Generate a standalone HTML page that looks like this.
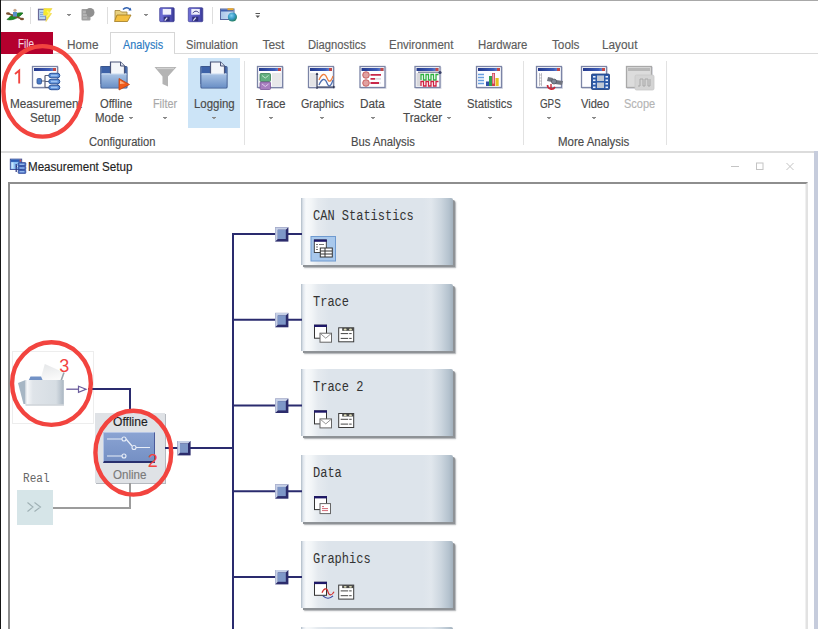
<!DOCTYPE html><html><head><meta charset="utf-8"><title>Measurement Setup</title><style>
*{margin:0;padding:0;box-sizing:border-box}
html,body{width:818px;height:629px;overflow:hidden;background:#fff}
body{position:relative;font-family:"Liberation Sans",sans-serif;color:#444}
.a{position:absolute}
.tab{position:absolute;top:38px;font-size:11.5px;line-height:13px;color:#4a4a4a;white-space:nowrap}
.lbl{position:absolute;font-size:11.5px;line-height:13px;white-space:nowrap;color:#4a4a4a;text-align:center}
.dd{position:absolute;width:5px;height:3px;background:linear-gradient(#888,#888) 0.5px 0/4px 1px no-repeat,linear-gradient(#999,#999) 1.5px 1px/2px 1px no-repeat}
.box{position:absolute;left:301px;width:152px;height:67px;
 background:linear-gradient(to right,#aebac6 0px,#dfe5ec 2px,#f7f9fb 5px,#f3f6f8 10px,#e5eaef 17px,#dde4eb 28px,#dde4eb 122px,#e1e7ed 130px,#ccd6df 140px,#b4c2ce 148px,#a2b0bc 152px);border-top-right-radius:2px;
 box-shadow:2px 2px 0 #8e9296,3px 3px 1.5px rgba(110,115,120,.6)}
.box .nm{position:absolute;left:12px;top:11px;font-family:"Liberation Mono",monospace;font-size:14px;line-height:15px;color:#333;white-space:nowrap;transform:scaleX(0.857);transform-origin:0 0}
svg{position:absolute;left:0;top:0;overflow:visible}
</style></head><body><div id="wrap" style="position:absolute;left:0;top:0;width:818px;height:629px;overflow:hidden;">
<div class="a" style="left:0;top:0;width:818px;height:1px;background:#a8a8a8"></div>
<div class="a" style="left:0;top:0;width:1px;height:629px;background:#161616"></div>
<div class="a" style="left:1px;top:32px;width:52px;height:22px;background:#b4002e"></div>
<div class="a" style="left:110px;top:32px;width:65px;height:22px;border:1px solid #d6d6d6;border-bottom:none;background:#fff"></div>
<div class="a" style="left:53px;top:53px;width:765px;height:1px;background:#dadada"></div>
<div class="a" style="left:111px;top:53px;width:63px;height:1px;background:#fff"></div>
<div class="a" style="left:188px;top:58px;width:52px;height:70px;background:#cce4f7"></div>
<div class="a" style="left:244px;top:61px;width:1px;height:84px;background:#e2e2e2"></div>
<div class="a" style="left:523px;top:61px;width:1px;height:84px;background:#e2e2e2"></div>
<div class="a" style="left:666px;top:61px;width:1px;height:84px;background:#e2e2e2"></div>
<div class="a" style="left:30px;top:7px;width:1px;height:17px;background:#dedede"></div>
<div class="a" style="left:107px;top:7px;width:1px;height:17px;background:#dedede"></div>
<div class="a" style="left:212px;top:7px;width:1px;height:17px;background:#dedede"></div>
<div class="a" style="left:1px;top:151px;width:813px;height:2px;background:#dcdcdc"></div>
<div class="a" style="left:814px;top:151px;width:4px;height:478px;background:#c6ccdc"></div>
<div class="a" style="left:8px;top:182px;width:800px;height:447px;border-left:2px solid #8e8e8e;border-top:2px solid #8e8e8e;border-right:2px solid #e2e2e2"></div>
<div class="a" style="left:805px;top:184px;width:1px;height:445px;background:#f0f0f0"></div>
<div class="box" style="top:198.0px"><div class="nm">CAN Statistics</div></div>
<div class="box" style="top:283.7px"><div class="nm">Trace</div></div>
<div class="box" style="top:369.4px"><div class="nm">Trace 2</div></div>
<div class="box" style="top:455.1px"><div class="nm">Data</div></div>
<div class="box" style="top:540.8px"><div class="nm">Graphics</div></div>
<div class="box" style="top:626.5px"><div class="nm"></div></div>
<div class="a" style="left:12px;top:351px;width:82px;height:73px;border:1px solid #ededed"></div>
<div class="a" style="left:95px;top:413px;width:70px;height:70px;background:#dfe2e6;box-shadow:1px 1px 0 #b5b9bf"></div>
<div class="a" style="left:103px;top:432px;width:52px;height:31px;background:linear-gradient(#8aa3d2,#7590c4);border-top:1px solid #b5c5e5;border-left:1px solid #b5c5e5;border-bottom:2px solid #28306e;border-right:1px solid #4a5a9a"></div>
<div class="a" style="left:17px;top:490px;width:36px;height:35px;background:#d6e5e8"></div>
<div class="a" style="left:17.98px;top:34.00px;font-size:12px;line-height:20px;white-space:nowrap;color:#f6d4e0;transform:scaleX(0.8222);transform-origin:0 0;-webkit-text-stroke:0.15px #f6d4e0;">File</div>
<div class="a" style="left:66.72px;top:34.60px;font-size:12px;line-height:20px;white-space:nowrap;color:#5c5c5c;transform:scaleX(0.9839);transform-origin:0 0;-webkit-text-stroke:0.15px #5c5c5c;">Home</div>
<div class="a" style="left:122.50px;top:34.60px;font-size:12px;line-height:20px;white-space:nowrap;color:#2a7ac3;transform:scaleX(0.8978);transform-origin:0 0;-webkit-text-stroke:0.15px #2a7ac3;">Analysis</div>
<div class="a" style="left:185.67px;top:34.60px;font-size:12px;line-height:20px;white-space:nowrap;color:#5c5c5c;transform:scaleX(0.9273);transform-origin:0 0;-webkit-text-stroke:0.15px #5c5c5c;">Simulation</div>
<div class="a" style="left:262.40px;top:34.60px;font-size:12px;line-height:20px;white-space:nowrap;color:#5c5c5c;transform:scaleX(1.0000);transform-origin:0 0;-webkit-text-stroke:0.15px #5c5c5c;">Test</div>
<div class="a" style="left:308.07px;top:34.60px;font-size:12px;line-height:20px;white-space:nowrap;color:#5c5c5c;transform:scaleX(0.9344);transform-origin:0 0;-webkit-text-stroke:0.15px #5c5c5c;">Diagnostics</div>
<div class="a" style="left:389.04px;top:34.60px;font-size:12px;line-height:20px;white-space:nowrap;color:#5c5c5c;transform:scaleX(0.9552);transform-origin:0 0;-webkit-text-stroke:0.15px #5c5c5c;">Environment</div>
<div class="a" style="left:477.55px;top:34.60px;font-size:12px;line-height:20px;white-space:nowrap;color:#5c5c5c;transform:scaleX(0.9490);transform-origin:0 0;-webkit-text-stroke:0.15px #5c5c5c;">Hardware</div>
<div class="a" style="left:551.60px;top:34.60px;font-size:12px;line-height:20px;white-space:nowrap;color:#5c5c5c;transform:scaleX(0.9786);transform-origin:0 0;-webkit-text-stroke:0.15px #5c5c5c;">Tools</div>
<div class="a" style="left:602.32px;top:34.60px;font-size:12px;line-height:20px;white-space:nowrap;color:#5c5c5c;transform:scaleX(0.9829);transform-origin:0 0;-webkit-text-stroke:0.15px #5c5c5c;">Layout</div>
<div class="a" style="left:9.52px;top:94.00px;font-size:12px;line-height:20px;white-space:nowrap;color:#4a4a4a;transform:scaleX(0.9795);transform-origin:0 0;-webkit-text-stroke:0.15px #4a4a4a;">Measurement</div>
<div class="a" style="left:30.12px;top:108.40px;font-size:12px;line-height:20px;white-space:nowrap;color:#4a4a4a;transform:scaleX(0.9767);transform-origin:0 0;-webkit-text-stroke:0.15px #4a4a4a;">Setup</div>
<div class="a" style="left:99.80px;top:94.00px;font-size:12px;line-height:20px;white-space:nowrap;color:#4a4a4a;transform:scaleX(0.9324);transform-origin:0 0;-webkit-text-stroke:0.15px #4a4a4a;">Offline</div>
<div class="a" style="left:94.84px;top:108.40px;font-size:12px;line-height:20px;white-space:nowrap;color:#4a4a4a;transform:scaleX(0.9586);transform-origin:0 0;-webkit-text-stroke:0.15px #4a4a4a;">Mode</div>
<div class="a" style="left:152.70px;top:94.00px;font-size:12px;line-height:20px;white-space:nowrap;color:#a8a8a8;transform:scaleX(0.9000);transform-origin:0 0;-webkit-text-stroke:0.15px #a8a8a8;">Filter</div>
<div class="a" style="left:193.75px;top:94.00px;font-size:12px;line-height:20px;white-space:nowrap;color:#4a4a4a;transform:scaleX(0.9537);transform-origin:0 0;-webkit-text-stroke:0.15px #4a4a4a;">Logging</div>
<div class="a" style="left:256.40px;top:94.00px;font-size:12px;line-height:20px;white-space:nowrap;color:#4a4a4a;transform:scaleX(0.9767);transform-origin:0 0;-webkit-text-stroke:0.15px #4a4a4a;">Trace</div>
<div class="a" style="left:300.80px;top:94.00px;font-size:12px;line-height:20px;white-space:nowrap;color:#4a4a4a;transform:scaleX(0.8958);transform-origin:0 0;-webkit-text-stroke:0.15px #4a4a4a;">Graphics</div>
<div class="a" style="left:359.82px;top:94.00px;font-size:12px;line-height:20px;white-space:nowrap;color:#4a4a4a;transform:scaleX(0.9800);transform-origin:0 0;-webkit-text-stroke:0.15px #4a4a4a;">Data</div>
<div class="a" style="left:413.60px;top:94.00px;font-size:12px;line-height:20px;white-space:nowrap;color:#4a4a4a;transform:scaleX(1.0000);transform-origin:0 0;-webkit-text-stroke:0.15px #4a4a4a;">State</div>
<div class="a" style="left:403.30px;top:108.40px;font-size:12px;line-height:20px;white-space:nowrap;color:#4a4a4a;transform:scaleX(0.9725);transform-origin:0 0;-webkit-text-stroke:0.15px #4a4a4a;">Tracker</div>
<div class="a" style="left:466.86px;top:94.00px;font-size:12px;line-height:20px;white-space:nowrap;color:#4a4a4a;transform:scaleX(0.9404);transform-origin:0 0;-webkit-text-stroke:0.15px #4a4a4a;">Statistics</div>
<div class="a" style="left:539.60px;top:94.00px;font-size:12px;line-height:20px;white-space:nowrap;color:#4a4a4a;transform:scaleX(0.8160);transform-origin:0 0;-webkit-text-stroke:0.15px #4a4a4a;">GPS</div>
<div class="a" style="left:580.70px;top:94.00px;font-size:12px;line-height:20px;white-space:nowrap;color:#4a4a4a;transform:scaleX(0.9267);transform-origin:0 0;-webkit-text-stroke:0.15px #4a4a4a;">Video</div>
<div class="a" style="left:623.78px;top:94.00px;font-size:12px;line-height:20px;white-space:nowrap;color:#b4b4b4;transform:scaleX(0.9182);transform-origin:0 0;-webkit-text-stroke:0.15px #b4b4b4;">Scope</div>
<div class="a" style="left:88.80px;top:131.60px;font-size:12px;line-height:20px;white-space:nowrap;color:#4a4a4a;transform:scaleX(0.9296);transform-origin:0 0;-webkit-text-stroke:0.15px #4a4a4a;">Configuration</div>
<div class="a" style="left:351.26px;top:131.60px;font-size:12px;line-height:20px;white-space:nowrap;color:#4a4a4a;transform:scaleX(0.9373);transform-origin:0 0;-webkit-text-stroke:0.15px #4a4a4a;">Bus Analysis</div>
<div class="a" style="left:558.05px;top:131.60px;font-size:12px;line-height:20px;white-space:nowrap;color:#4a4a4a;transform:scaleX(0.9541);transform-origin:0 0;-webkit-text-stroke:0.15px #4a4a4a;">More Analysis</div>
<div class="dd" style="left:66.5px;top:14px"></div>
<div class="dd" style="left:143.5px;top:14px"></div>
<div class="dd" style="left:128.2px;top:117px"></div>
<div class="dd" style="left:162.5px;top:117px"></div>
<div class="dd" style="left:211.5px;top:117px"></div>
<div class="dd" style="left:268.3px;top:117px"></div>
<div class="dd" style="left:319.8px;top:117px"></div>
<div class="dd" style="left:370.4px;top:117px"></div>
<div class="dd" style="left:446.9px;top:117px"></div>
<div class="dd" style="left:487.0px;top:117px"></div>
<div class="dd" style="left:546.9px;top:117px"></div>
<div class="dd" style="left:591.9px;top:117px"></div>
<div class="a" style="left:28.43px;top:157.40px;font-size:12px;line-height:20px;white-space:nowrap;color:#1e1e1e;transform:scaleX(0.9654);transform-origin:0 0;-webkit-text-stroke:0.15px #1e1e1e;">Measurement Setup</div>
<div class="a" style="left:112.70px;top:412.00px;font-size:12px;line-height:20px;white-space:nowrap;color:#1e1e1e;transform:scaleX(1.0088);transform-origin:0 0;-webkit-text-stroke:0.15px #1e1e1e;">Offline</div>
<div class="a" style="left:113.20px;top:465.00px;font-size:12px;line-height:20px;white-space:nowrap;color:#7a7a7a;transform:scaleX(0.9657);transform-origin:0 0;-webkit-text-stroke:0.15px #7a7a7a;">Online</div>
<div class="a" style="left:23.2px;top:472.8px;font-family:'Liberation Mono',monospace;font-size:12px;line-height:13px;color:#666;white-space:nowrap;transform:scaleX(0.92);transform-origin:0 0">Real</div>
<svg width="818" height="629" viewBox="0 0 818 629"><defs>
<linearGradient id="flop" x1="0" x2="1"><stop offset="0" stop-color="#7070d8"/><stop offset="0.8" stop-color="#4a4ab0"/><stop offset="1" stop-color="#383890"/></linearGradient><linearGradient id="wglobe" x1="0" x2="1"><stop offset="0" stop-color="#a8c4e8"/><stop offset="1" stop-color="#d8e6f6"/></linearGradient>
<radialGradient id="globe" cx="0.4" cy="0.35" r="0.7"><stop offset="0" stop-color="#80d0f0"/><stop offset="0.5" stop-color="#3a9ac8"/><stop offset="1" stop-color="#1f7a50"/></radialGradient>
<linearGradient id="tb" x1="0" x2="1"><stop offset="0" stop-color="#243a8c"/><stop offset="0.7" stop-color="#3e5cb8"/><stop offset="1" stop-color="#7d9ad8"/></linearGradient>
<linearGradient id="fold" x1="0" y1="0" x2="0" y2="1"><stop offset="0" stop-color="#a9c3e4"/><stop offset="1" stop-color="#6b90c6"/></linearGradient>
<linearGradient id="conn" x1="0" y1="0" x2="1" y2="1"><stop offset="0" stop-color="#b7c6e4"/><stop offset="1" stop-color="#7f97c8"/></linearGradient>
<linearGradient id="gfold" x1="0" y1="0" x2="1" y2="0"><stop offset="0" stop-color="#c8d0d8"/><stop offset="0.05" stop-color="#f6f8fa"/><stop offset="0.2" stop-color="#dfe4e9"/><stop offset="0.8" stop-color="#d6dde3"/><stop offset="1" stop-color="#aab6c2"/></linearGradient><linearGradient id="paper" x1="0" y1="0" x2="0.3" y2="1"><stop offset="0" stop-color="#e4e6e8"/><stop offset="1" stop-color="#fafafa"/></linearGradient>
</defs><rect x="33" y="67" width="26" height="22" fill="#c8ccd8" opacity="0.6"/><rect x="32.5" y="66.5" width="25" height="21" fill="#fdfdff" stroke="#7b84a6" stroke-width="1.3"/><rect x="34" y="68" width="22" height="3" fill="url(#tb)"/><rect x="53" y="68" width="3" height="3" fill="#c24848"/><path d="M41 81 H45 M45 75.5 V87.5 M45 75.5 H49 M45 81.5 H49 M45 87.5 H49" stroke="#5a6078" stroke-width="1.2" fill="none"/><rect x="37" y="78.5" width="4.5" height="5.5" rx="1.2" fill="#4a7cc8" stroke="#2d4f90" stroke-width="0.8"/><rect x="48.8" y="73.3" width="11" height="4.5" rx="2.2" fill="#5b8fd8" stroke="#2a5298" stroke-width="1"/><rect x="51" y="74.7" width="6.5" height="1.6" fill="#9fc4f2"/><rect x="48.8" y="79.3" width="11" height="4.5" rx="2.2" fill="#5b8fd8" stroke="#2a5298" stroke-width="1"/><rect x="51" y="80.7" width="6.5" height="1.6" fill="#9fc4f2"/><rect x="48.8" y="85.2" width="11" height="4.5" rx="2.2" fill="#5b8fd8" stroke="#2a5298" stroke-width="1"/><rect x="51" y="86.60000000000001" width="6.5" height="1.6" fill="#9fc4f2"/><path d="M100.5 66 H110.5 V84 H100.5 Z" fill="#4a6aa8"/><rect x="101.0" y="66.5" width="26" height="21.5" rx="1" fill="url(#fold)" stroke="#3b568c" stroke-width="1.2"/><rect x="101.5" y="67" width="25" height="6" fill="#3d62a8"/><path d="M110.5 62 H120.5 L124.5 66 V78 H110.5 Z" fill="#f4f6fa" stroke="#4a5478" stroke-width="1.2"/><path d="M120.5 62 V66 H124.5" fill="#dfe4ee" stroke="#4a5478" stroke-width="1"/><rect x="101.5" y="74" width="25" height="13.5" fill="url(#fold)"/><path d="M101.5 74 H126.5" stroke="#c9daf0" stroke-width="1"/><path d="M119 78.5 L129.5 84.5 L119 90 Z" fill="#f05a1a" stroke="#c04010" stroke-width="0.8"/><path d="M120 80.5 L125 83.5 L120 84 Z" fill="#ffb080"/><path d="M200.5 66 H210.5 V84 H200.5 Z" fill="#4a6aa8"/><rect x="201.0" y="66.5" width="26" height="21.5" rx="1" fill="url(#fold)" stroke="#3b568c" stroke-width="1.2"/><rect x="201.5" y="67" width="25" height="6" fill="#3d62a8"/><path d="M210.5 62 H220.5 L224.5 66 V78 H210.5 Z" fill="#f4f6fa" stroke="#4a5478" stroke-width="1.2"/><path d="M220.5 62 V66 H224.5" fill="#dfe4ee" stroke="#4a5478" stroke-width="1"/><rect x="201.5" y="74" width="25" height="13.5" fill="url(#fold)"/><path d="M201.5 74 H226.5" stroke="#c9daf0" stroke-width="1"/><path d="M154.5 67 H176.5 L168 76.5 V86.5 L162.5 84 V76.5 Z" fill="#b4b4b4"/><path d="M157 68.5 H174" stroke="#d0d0d0" stroke-width="1.2"/><rect x="258" y="67" width="26" height="22" fill="#c8ccd8" opacity="0.6"/><rect x="257.5" y="66.5" width="25" height="21" fill="#fdfdff" stroke="#7b84a6" stroke-width="1.3"/><rect x="259" y="68" width="22" height="3" fill="url(#tb)"/><rect x="278" y="68" width="3" height="3" fill="#c24848"/><rect x="272" y="73" width="9" height="13" fill="#e8e8ea"/><rect x="260" y="73.5" width="10.5" height="8" rx="1" fill="#62b080" stroke="#3d8058" stroke-width="0.8"/><path d="M262 75.5 L265.3 78 L268.5 75.5" stroke="#d8f0e0" stroke-width="0.8" fill="none"/><rect x="260" y="82" width="10.5" height="7.5" rx="1" fill="#a880c0" stroke="#7a5698" stroke-width="0.8"/><path d="M262 84 L265.3 86.5 L268.5 84" stroke="#eadcf4" stroke-width="0.8" fill="none"/><rect x="309" y="67" width="26" height="22" fill="#c8ccd8" opacity="0.6"/><rect x="308.5" y="66.5" width="25" height="21" fill="#fdfdff" stroke="#7b84a6" stroke-width="1.3"/><rect x="310" y="68" width="22" height="3" fill="url(#tb)"/><rect x="329" y="68" width="3" height="3" fill="#c24848"/><rect x="310" y="73" width="6" height="13" fill="#e4e4e6"/><path d="M319 80 C322 73,325 73,327 78 S331 82,333 76" stroke="#f08040" stroke-width="1.3" fill="none"/><path d="M319 85 C322 78,325 78,327 83 S331 86,333 80" stroke="#5070b0" stroke-width="1.3" fill="none"/><path d="M317 73 V89 M317 87 H334" stroke="#333a58" stroke-width="1.2"/><path d="M315.5 75 L317 72.5 L318.5 75 Z M333 85.5 L335.5 87 L333 88.5 Z" fill="#333a58"/><rect x="360.5" y="67" width="26" height="22" fill="#c8ccd8" opacity="0.6"/><rect x="360.0" y="66.5" width="25" height="21" fill="#fdfdff" stroke="#7b84a6" stroke-width="1.3"/><rect x="361.5" y="68" width="22" height="3" fill="url(#tb)"/><rect x="380.5" y="68" width="3" height="3" fill="#c24848"/><circle cx="366" cy="75" r="3.3" fill="#e0a0a0" stroke="#c04a4a" stroke-width="0.8"/><circle cx="366" cy="83" r="3.3" fill="#e0a0a0" stroke="#c04a4a" stroke-width="0.8"/><path d="M370.5 74.8 H381 M370.5 78.8 H375 M370.5 83 H379" stroke="#c8284a" stroke-width="1.8"/><path d="M375 78.8 H381 M379 83 H381" stroke="#d0d0d8" stroke-width="1.2"/><rect x="415.5" y="67" width="26" height="22" fill="#c8ccd8" opacity="0.6"/><rect x="415.0" y="66.5" width="25" height="21" fill="#fdfdff" stroke="#7b84a6" stroke-width="1.3"/><rect x="416.5" y="68" width="22" height="3" fill="url(#tb)"/><rect x="435.5" y="68" width="3" height="3" fill="#c24848"/><rect x="416.5" y="73" width="4" height="13" fill="#d8d8dc"/><path d="M418 72.2 H440" stroke="#5a6080" stroke-width="1"/><circle cx="440" cy="72.5" r="1.6" fill="#3a4068"/><path d="M421 80 V74.5 H423.5 V80 H426 V74.5 H428.5 V80 H431 V74.5 H433.5 V80 H436 V74.5 H438.5" stroke="#30b040" stroke-width="1.3" fill="none"/><path d="M421 86 V81.5 H423.5 V86 H426 V81.5 H428.5 V86 H431 V81.5 H433.5 V86 H436 V81.5 H438.5" stroke="#d02040" stroke-width="1.3" fill="none"/><rect x="477" y="67" width="26" height="22" fill="#c8ccd8" opacity="0.6"/><rect x="476.5" y="66.5" width="25" height="21" fill="#fdfdff" stroke="#7b84a6" stroke-width="1.3"/><rect x="478" y="68" width="22" height="3" fill="url(#tb)"/><rect x="497" y="68" width="3" height="3" fill="#c24848"/><path d="M478 74.5 H484 M478 77.5 H484 M478 80.5 H484 M478 83.5 H484" stroke="#6aa0e0" stroke-width="1.4"/><rect x="486" y="81.5" width="3" height="4.5" fill="#3050a8"/><rect x="489" y="76" width="3" height="10" fill="#30a050"/><rect x="492" y="73" width="3" height="13" fill="#d04050"/><rect x="492.6" y="73.6" width="1.6" height="10" fill="#f0b0c0"/><rect x="495.5" y="78" width="3.2" height="8" fill="#e8c020"/><rect x="537" y="67" width="26" height="22" fill="#c8ccd8" opacity="0.6"/><rect x="536.5" y="66.5" width="25" height="21" fill="#fdfdff" stroke="#7b84a6" stroke-width="1.3"/><rect x="538" y="68" width="22" height="3" fill="url(#tb)"/><rect x="557" y="68" width="3" height="3" fill="#c24848"/><path d="M539.5 73 V86 M541.5 73 V86" stroke="#c0c0c8" stroke-width="1"/><path d="M539 75 H542 M539 78 H542 M539 81 H542 M539 84 H542" stroke="#a8a8b0" stroke-width="0.7"/><path d="M548 77 L553 78 L552 82 L547 81 Z M556 80 L563 81 L562 85 L555 84 Z" fill="#707480"/><circle cx="554" cy="81.5" r="2.5" fill="#808898" stroke="#505460" stroke-width="0.8"/><path d="M547.5 85 A4 4 0 0 0 555 87" stroke="#c82838" stroke-width="1.6" fill="none"/><path d="M551 84 V89" stroke="#c82838" stroke-width="1.4"/><rect x="582" y="67" width="26" height="22" fill="#c8ccd8" opacity="0.6"/><rect x="581.5" y="66.5" width="25" height="21" fill="#fdfdff" stroke="#7b84a6" stroke-width="1.3"/><rect x="583" y="68" width="22" height="3" fill="url(#tb)"/><rect x="602" y="68" width="3" height="3" fill="#c24848"/><rect x="591.5" y="74" width="18" height="15.5" rx="1" fill="#2d5aa8" stroke="#1e3c78" stroke-width="0.8"/><rect x="593" y="76" width="2.5" height="1.6" fill="#e8f0ff"/><rect x="605.5" y="76" width="2.5" height="1.6" fill="#e8f0ff"/><rect x="593" y="79.5" width="2.5" height="1.6" fill="#e8f0ff"/><rect x="605.5" y="79.5" width="2.5" height="1.6" fill="#e8f0ff"/><rect x="593" y="83" width="2.5" height="1.6" fill="#e8f0ff"/><rect x="605.5" y="83" width="2.5" height="1.6" fill="#e8f0ff"/><rect x="593" y="86.5" width="2.5" height="1.6" fill="#e8f0ff"/><rect x="605.5" y="86.5" width="2.5" height="1.6" fill="#e8f0ff"/><rect x="597" y="75.5" width="7" height="5.5" fill="#c0c8d4"/><rect x="597" y="82.5" width="7" height="5.5" fill="#c0c8d4"/><rect x="627" y="67" width="26" height="22" fill="#c8ccd8" opacity="0.6"/><rect x="626.5" y="66.5" width="25" height="21" fill="#dcdcdc" stroke="#a9a9a9" stroke-width="1.3"/><rect x="628" y="68" width="22" height="3" fill="#b8b8b8"/><rect x="635" y="75" width="19" height="15" rx="1.5" fill="#d4d4d4" stroke="#c8c8c8" stroke-width="0.8"/><path d="M638 86 H640 V79 H643 V86 H645 V79 H648 V86 H650 V79" stroke="#a8a8a8" stroke-width="1" fill="none"/><path d="M7 19.5 C12 14,18 12,23 13 C19 18,12 21,7 19.5 Z" fill="#1d8a24" stroke="#0d5a14" stroke-width="0.6"/><path d="M8 13.5 L22 19" stroke="#7a5030" stroke-width="1.6"/><ellipse cx="8" cy="13.5" rx="2" ry="1.2" fill="#7a5030"/><ellipse cx="22" cy="19" rx="2" ry="1.2" fill="#7a5030"/><rect x="13" y="12" width="4" height="4.5" fill="#5a90c8"/><circle cx="15" cy="10.3" r="1.6" fill="#c8a890"/><rect x="38.5" y="9.3" width="7.5" height="10.5" fill="#b8d4f0" stroke="#6a6a98" stroke-width="1.2"/><path d="M40 12.5 H45 M40 14.5 H45 M40 16.5 H45" stroke="#7aa0d0" stroke-width="0.8"/><path d="M44 8.5 H52 L49 13 L51.5 13.5 L46 21.5 L47 15.5 L43.5 15 Z" fill="#f6ea28" stroke="#f0d860" stroke-width="0.8"/><path d="M47 11 L49.5 13.5 L46.5 17" stroke="#fff36a" stroke-width="1.5" fill="none"/><rect x="81.5" y="9" width="9" height="11.5" rx="1" fill="#a0a0a0"/><circle cx="90" cy="12.5" r="4.5" fill="#909090"/><path d="M83 12 H86 M83 15 H87 M83 18 H87" stroke="#d0d0d0" stroke-width="0.8"/><path d="M115 10.5 H120 L121.5 12 H127 V20.5 H115 Z" fill="#e8d080" stroke="#a08030" stroke-width="0.8"/><path d="M117 15 H131 L127.5 21.5 H114.5 Z" fill="#f4c040" stroke="#a07820" stroke-width="0.8"/><path d="M123 9.5 C125 7,129 7,130 10" stroke="#3060b0" stroke-width="1.4" fill="none"/><path d="M128.5 10.5 L131.5 10.5 L130.5 7.5 Z" fill="#3060b0"/><rect x="159.7" y="7.7" width="14.5" height="14" rx="1" fill="url(#flop)" stroke="#3a3a90" stroke-width="0.7"/><rect x="162.7" y="8.9" width="8.5" height="5.8" fill="#f0f0fc"/><rect x="163.7" y="16.7" width="6" height="4.5" fill="#30307a"/><path d="M164.7 20.7 L167.2 17.7" stroke="#e8e8f8" stroke-width="1.2"/><rect x="188.3" y="7.7" width="14.5" height="14" rx="1" fill="url(#flop)" stroke="#3a3a90" stroke-width="0.7"/><rect x="191.3" y="8.9" width="8.5" height="5.8" fill="#f0f0fc"/><rect x="192.3" y="16.7" width="6" height="4.5" fill="#30307a"/><path d="M193.3 20.7 L195.8 17.7" stroke="#e8e8f8" stroke-width="1.2"/><path d="M192.8 13.2 C194.3 10.7,197.3 10.7,198.8 12.7" stroke="#30307a" stroke-width="1" fill="none"/><rect x="220.5" y="9" width="13.5" height="10.5" fill="url(#wglobe)" stroke="#5868a0" stroke-width="1"/><rect x="221" y="9.5" width="12.5" height="2" fill="#4060b0"/><rect x="227.5" y="8.2" width="6" height="2" fill="#e8a830"/><circle cx="232.4" cy="17" r="4.6" fill="url(#globe)"/><path d="M255.5 13.5 H260" stroke="#555" stroke-width="1"/><path d="M255.5 15.5 H260 L257.75 18 Z" fill="#555"/><rect x="10.3" y="159.1" width="11.4" height="10.4" fill="#8cc0f2" stroke="#3c4c94" stroke-width="0.9"/><rect x="10.8" y="159.6" width="10.4" height="2.3" fill="#2e5cb4"/><rect x="19.6" y="159.6" width="1.6" height="2" fill="#c85050"/><rect x="11.5" y="162.5" width="2" height="6" fill="#c8e4fc"/><path d="M16.2 164 V172 M16.2 166.5 H18" stroke="#2a3480" stroke-width="1.2"/><path d="M17 165.5 L18.5 166.5 L17 167.5 Z" fill="#e0ecff"/><rect x="18.2" y="162.6" width="7.6" height="3.4" rx="0.6" fill="#4a70c4" stroke="#2a4090" stroke-width="0.7"/><rect x="19.6" y="163.7" width="4.8" height="1.2" fill="#9cc0f0"/><rect x="18.2" y="166.3" width="7.6" height="3.4" rx="0.6" fill="#4a70c4" stroke="#2a4090" stroke-width="0.7"/><rect x="19.6" y="167.4" width="4.8" height="1.2" fill="#9cc0f0"/><rect x="18.2" y="170.0" width="7.6" height="3.4" rx="0.6" fill="#4a70c4" stroke="#2a4090" stroke-width="0.7"/><rect x="19.6" y="171.1" width="4.8" height="1.2" fill="#9cc0f0"/><path d="M731 166.5 H739" stroke="#c4c4c4" stroke-width="1"/><rect x="756.5" y="163" width="6.5" height="6.5" fill="none" stroke="#c4c4c4" stroke-width="1"/><path d="M786.5 163 L793.5 170 M793.5 163 L786.5 170" stroke="#c4c4c4" stroke-width="1"/><path d="M233 234 V629" stroke="#2a2b6e" stroke-width="2" fill="none"/><path d="M232 234.1 H302" stroke="#2a2b6e" stroke-width="2"/><path d="M232 319.8 H302" stroke="#2a2b6e" stroke-width="2"/><path d="M232 405.5 H302" stroke="#2a2b6e" stroke-width="2"/><path d="M232 491.2 H302" stroke="#2a2b6e" stroke-width="2"/><path d="M232 576.9 H302" stroke="#2a2b6e" stroke-width="2"/><path d="M165 448 H233" stroke="#2a2b6e" stroke-width="2"/><path d="M88 389 H130 V413" stroke="#2a2b6e" stroke-width="2" fill="none"/><rect x="275.2" y="227.2" width="13.2" height="14.4" fill="#2c2c6c"/><path d="M275.2 227.2 H288.4 L285.79999999999995 229.79999999999998 H277.8 V239.0 L275.2 241.6 Z" fill="#c6d0e6"/><rect x="277.8" y="229.79999999999998" width="7.999999999999999" height="9.2" fill="#7e97c7"/><rect x="275.2" y="312.9" width="13.2" height="14.4" fill="#2c2c6c"/><path d="M275.2 312.9 H288.4 L285.79999999999995 315.5 H277.8 V324.69999999999993 L275.2 327.29999999999995 Z" fill="#c6d0e6"/><rect x="277.8" y="315.5" width="7.999999999999999" height="9.2" fill="#7e97c7"/><rect x="275.2" y="398.6" width="13.2" height="14.4" fill="#2c2c6c"/><path d="M275.2 398.6 H288.4 L285.79999999999995 401.20000000000005 H277.8 V410.4 L275.2 413.0 Z" fill="#c6d0e6"/><rect x="277.8" y="401.20000000000005" width="7.999999999999999" height="9.2" fill="#7e97c7"/><rect x="275.2" y="484.3" width="13.2" height="14.4" fill="#2c2c6c"/><path d="M275.2 484.3 H288.4 L285.79999999999995 486.90000000000003 H277.8 V496.09999999999997 L275.2 498.7 Z" fill="#c6d0e6"/><rect x="277.8" y="486.90000000000003" width="7.999999999999999" height="9.2" fill="#7e97c7"/><rect x="275.2" y="570.0" width="13.2" height="14.4" fill="#2c2c6c"/><path d="M275.2 570.0 H288.4 L285.79999999999995 572.6 H277.8 V581.8 L275.2 584.4 Z" fill="#c6d0e6"/><rect x="277.8" y="572.6" width="7.999999999999999" height="9.2" fill="#7e97c7"/><rect x="177.4" y="441" width="13.2" height="14.4" fill="#2c2c6c"/><path d="M177.4 441 H190.6 L188.0 443.6 H180.0 V452.79999999999995 L177.4 455.4 Z" fill="#c6d0e6"/><rect x="180.0" y="443.6" width="7.999999999999999" height="9.2" fill="#7e97c7"/><path d="M53 508 H130 V483" stroke="#9c9c9c" stroke-width="2" fill="none"/><path d="M27.5 502.5 L33 507 L27.5 511.5 M34.5 502.5 L40.5 507 L34.5 511.5" stroke="#9fb0b4" stroke-width="1.1" fill="none"/><path d="M107 439 H122 M126 439 L132 446 M136 447.5 H150 M107 456 H122" stroke="#e8eef8" stroke-width="1.2" fill="none"/><circle cx="124" cy="439" r="2" fill="#7b96c8" stroke="#e8eef8" stroke-width="1.1"/><circle cx="134" cy="447.5" r="2" fill="#7b96c8" stroke="#e8eef8" stroke-width="1.1"/><circle cx="124" cy="456" r="2" fill="#7b96c8" stroke="#e8eef8" stroke-width="1.1"/><path d="M18 383 L25.5 380 L25.5 404 L23.5 404 Z" fill="#a6b6c4"/><path d="M44.8 364 L64 372.5 L61 381 L40 381 Z" fill="url(#paper)"/><path d="M64 372.5 L61 381" stroke="#9aa4ac" stroke-width="1.6"/><path d="M28.6 380.5 L30.5 376.5 H41 L42.8 380.5 Z" fill="#7292c6"/><rect x="25.2" y="380" width="38.6" height="24.4" fill="url(#gfold)"/><path d="M25.5 405 H64" stroke="#b4bcc4" stroke-width="1.2"/><path d="M66.3 389.2 H78.5" stroke="#6a5c9c" stroke-width="1.3"/><path d="M78.5 386.2 L86 389.2 L78.5 392.3 Z" fill="#fff" stroke="#6a5c9c" stroke-width="1.2"/><rect x="311" y="236.5" width="24.5" height="24.5" fill="#a8c8ec" stroke="#6e9ad0" stroke-width="1"/><rect x="314.3" y="240" width="12" height="12.5" fill="#fff" stroke="#333" stroke-width="0.9"/><rect x="314" y="239.5" width="12.8" height="2.3" fill="#1e1868"/><path d="M316 244.5 H318 M319 244.5 H324 M316 247 H318 M316 249.5 H318" stroke="#555" stroke-width="0.8"/><rect x="320.3" y="248" width="12" height="9" fill="#fff" stroke="#333" stroke-width="1"/><path d="M320.5 251 H332 M320.5 254 H332 M325 248 V257" stroke="#333" stroke-width="1"/><rect x="314.5" y="325.2" width="12" height="13" fill="#fff" stroke="#333" stroke-width="1"/><rect x="314" y="324.7" width="13" height="2.3" fill="#1e1868"/><rect x="320" y="333.2" width="11.5" height="9" fill="#fff" stroke="#666" stroke-width="1"/><path d="M320.5 333.7 L325.8 338.2 L331 333.7" stroke="#888" stroke-width="0.9" fill="none"/><rect x="338.7" y="327.8" width="15" height="14" fill="#fff" stroke="#3a3a3a" stroke-width="1"/><rect x="342.2" y="327.8" width="11.5" height="3" fill="#484848"/><ellipse cx="345.2" cy="329.5" rx="1.5" ry="0.9" fill="#dcdcb8"/><ellipse cx="350.5" cy="329.5" rx="1.5" ry="0.9" fill="#dcdcb8"/><path d="M340.7 333.6 H348.2 M349.2 333.6 H351.7 M340.7 338.40000000000003 H348.2 M349.2 338.40000000000003 H351.7" stroke="#444" stroke-width="1"/><rect x="314.5" y="410.9" width="12" height="13" fill="#fff" stroke="#333" stroke-width="1"/><rect x="314" y="410.4" width="13" height="2.3" fill="#1e1868"/><rect x="320" y="418.9" width="11.5" height="9" fill="#fff" stroke="#666" stroke-width="1"/><path d="M320.5 419.4 L325.8 423.9 L331 419.4" stroke="#888" stroke-width="0.9" fill="none"/><rect x="338.7" y="413.5" width="15" height="14" fill="#fff" stroke="#3a3a3a" stroke-width="1"/><rect x="342.2" y="413.5" width="11.5" height="3" fill="#484848"/><ellipse cx="345.2" cy="415.2" rx="1.5" ry="0.9" fill="#dcdcb8"/><ellipse cx="350.5" cy="415.2" rx="1.5" ry="0.9" fill="#dcdcb8"/><path d="M340.7 419.3 H348.2 M349.2 419.3 H351.7 M340.7 424.1 H348.2 M349.2 424.1 H351.7" stroke="#444" stroke-width="1"/><g transform="translate(0,-0.9)"><rect x="314.5" y="497.5" width="12" height="13" fill="#fff" stroke="#333" stroke-width="1"/><rect x="314" y="497" width="13" height="2.3" fill="#1e1868"/><rect x="320" y="504.5" width="10.5" height="10" fill="#fff" stroke="#666" stroke-width="1"/><path d="M322 507.5 H324 M322 509.5 H328 M322 511.5 H328" stroke="#c84050" stroke-width="0.8"/></g><g transform="translate(0,-1.2)"><rect x="314.5" y="583.5" width="12" height="13" fill="#fff" stroke="#333" stroke-width="1"/><rect x="314" y="583" width="13" height="2.3" fill="#1e1868"/><path d="M322 594 C324 589,327 589,328 593 C329 597,332 597,334 593" stroke="#d03030" stroke-width="1.2" fill="none"/><path d="M323 597 C326 600,330 600,333 597" stroke="#3040a0" stroke-width="1.2" fill="none"/><rect x="338.7" y="586.3" width="15" height="14" fill="#fff" stroke="#3a3a3a" stroke-width="1"/><rect x="342.2" y="586.3" width="11.5" height="3" fill="#484848"/><ellipse cx="345.2" cy="588.0" rx="1.5" ry="0.9" fill="#dcdcb8"/><ellipse cx="350.5" cy="588.0" rx="1.5" ry="0.9" fill="#dcdcb8"/><path d="M340.7 592.0999999999999 H348.2 M349.2 592.0999999999999 H351.7 M340.7 596.9 H348.2 M349.2 596.9 H351.7" stroke="#444" stroke-width="1"/></g></svg>
<svg width="818" height="629" viewBox="0 0 818 629"><ellipse cx="42.55" cy="91.35" rx="39.15" ry="45.25" fill="none" stroke="#f2443f" stroke-width="4.4"/><ellipse cx="51.45" cy="383.6" rx="39.4" ry="41.3" fill="none" stroke="#f2443f" stroke-width="4.4"/><ellipse cx="133.3" cy="452.65" rx="37.9" ry="41.95" fill="none" stroke="#f2443f" stroke-width="4.4"/></svg>
<svg width="818" height="629"><path d="M15 74 L19.2 70.6 V83.4" stroke="#f2443f" stroke-width="1.9" fill="none"/></svg>
<div class="a" style="left:59.2px;top:356.8px;font-size:18px;line-height:18px;color:#f2443f">3</div>
<div class="a" style="left:147.8px;top:451.6px;font-size:18px;line-height:18px;color:#f2443f">2</div>
</div></body></html>
